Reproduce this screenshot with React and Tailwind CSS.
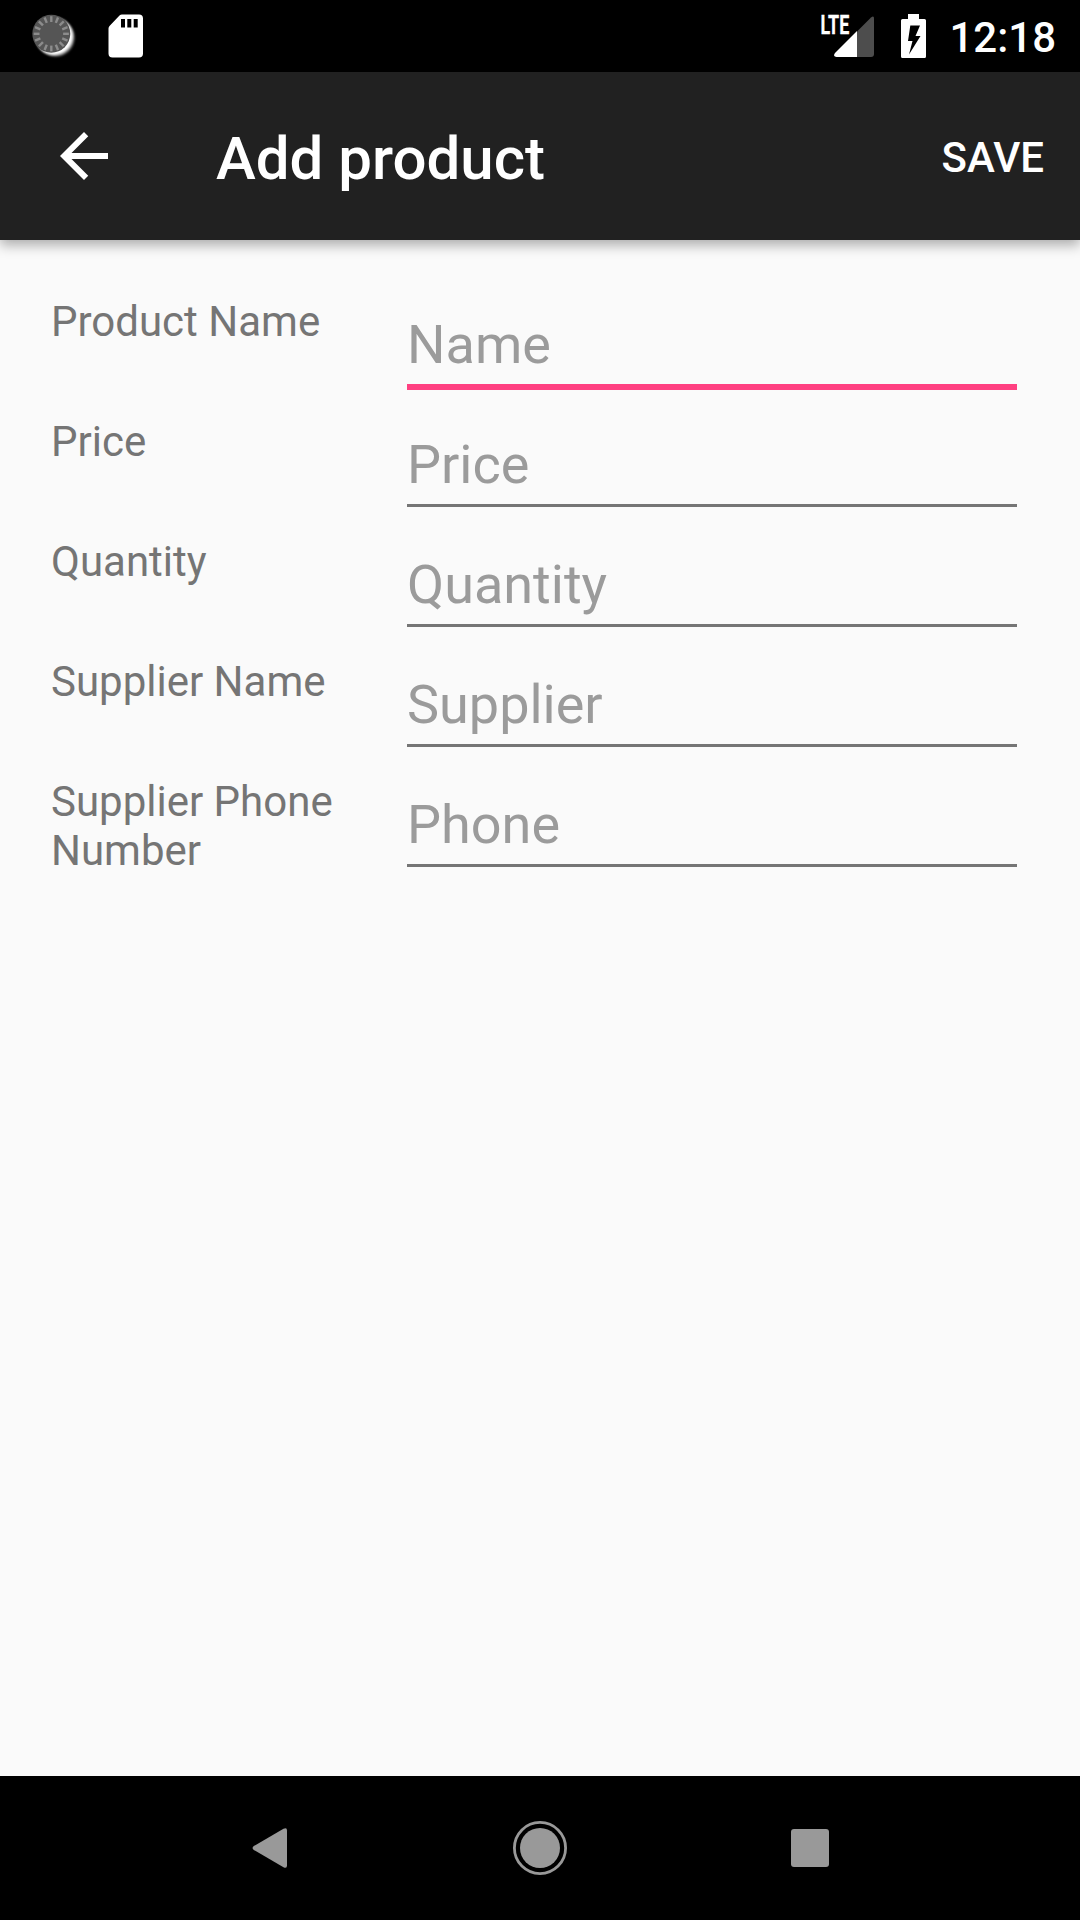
const fields = [
  { label: 'Product Name', hint: 'Name', focused: true },
  { label: 'Price', hint: 'Price' },
  { label: 'Quantity', hint: 'Quantity' },
  { label: 'Supplier Name', hint: 'Supplier' },
  { label: 'Supplier Phone Number', hint: 'Phone' },
];

const ticks = Array.from({ length: 16 }, (_, i) => i * 22.5);

function SpinnerIcon() {
  return (
    <svg width="48" height="48" viewBox="0 0 48 48">
      <defs>
        <filter id="soft" x="-20%" y="-20%" width="140%" height="140%">
          <feGaussianBlur stdDeviation="0.8" />
        </filter>
      </defs>
      <circle cx="26.6" cy="25.6" r="19" fill="#777" filter="url(#soft)" />
      <circle cx="25" cy="24.2" r="18.8" fill="#fff" filter="url(#soft)" />
      <circle cx="22.3" cy="21.8" r="19" fill="#555" />
      {ticks.map((angle) => (
        <line
          key={angle}
          x1="22.3"
          y1="10"
          x2="22.3"
          y2="4.2"
          stroke="#8c8c8c"
          strokeWidth="2.4"
          transform={`rotate(${angle} 22.3 21.8)`}
        />
      ))}
    </svg>
  );
}

function SdCardIcon() {
  return (
    <svg width="36" height="44" viewBox="0 0 36 44">
      <path
        fill="#fff"
        fillRule="evenodd"
        d="M14 .5h17a4 4 0 0 1 4 4v35a4 4 0 0 1-4 4H4.500a4 4 0 0 1-4-4V14.500q0-1.500 1-2.500L11.500 1.500q1-1 2.500-1zM13 5v8.500h4V5zM19.300 5v8.500h4V5zM25.700 5v8.500h4V5z"
      />
    </svg>
  );
}

function SignalIcon() {
  return (
    <svg className="overflow-visible" width="56" height="46" viewBox="0 0 56 46">
      <path fill="#4d4d4d" d="M37 18.500 51 4.500q3-2.500 3 1V41q0 3-3 3H37z" />
      <path fill="#fff" d="M37 18v26H16.500q-4-.5-1.500-4z" />
      <text
        x="0.400"
        y="20.500"
        fill="#fff"
        stroke="#fff"
        strokeWidth="0.300"
        fontFamily="Roboto, sans-serif"
        fontWeight="700"
        fontSize="26"
        textLength="28.800"
        lengthAdjust="spacingAndGlyphs"
      >
        LTE
      </text>
    </svg>
  );
}

function BatteryIcon() {
  return (
    <svg width="25" height="44" viewBox="0 0 25 44">
      <path
        fill="#fff"
        fillRule="evenodd"
        d="M7 0h11v5h5.500Q25 5 25 6.500v36q0 1.500-1.500 1.500h-22Q0 44 0 42.500v-36Q0 5 1.500 5H7zM9.300 11.500 7 27h4.500L8 40.500 19.500 22H14.500l4.500-10.500z"
      />
    </svg>
  );
}

function StatusBar() {
  return (
    <div className="flex h-[72px] items-start justify-between bg-black">
      <div className="flex items-start pl-[29px]">
        <div className="pt-3">
          <SpinnerIcon />
        </div>
        <div className="pt-3.5 pl-[31px]">
          <SdCardIcon />
        </div>
      </div>
      <div className="flex items-start pr-6">
        <div className="pt-[13px]">
          <SignalIcon />
        </div>
        <div className="pt-3.5 pl-[25px]">
          <BatteryIcon />
        </div>
        <span className="pt-[13px] pl-[23px] text-[42px] leading-[49px] font-medium text-white">12:18</span>
      </div>
    </div>
  );
}

function AppBar() {
  return (
    <header className="flex h-[168px] items-center bg-[#212121] pr-9 pl-12 text-white shadow-[0_5px_12px_rgba(0,0,0,0.32)]">
      <svg className="size-[72px]" viewBox="0 0 24 24" fill="currentColor">
        <path d="M20 11H7.830l5.590-5.590L12 4l-8 8 8 8 1.410-1.410L7.830 13H20v-2z" />
      </svg>
      <h1 className="grow pt-[5px] pl-24 text-[60px] leading-[70px] font-medium">Add product</h1>
      <button className="pt-0.5 text-[42px] leading-[49px] font-medium">SAVE</button>
    </header>
  );
}

function Field({ label, hint, focused }) {
  return (
    <div className="flex h-[120px] items-start">
      <label className="w-[356px] pr-[60px] text-[42px] leading-[49px] text-[#757575]">{label}</label>
      <div className="w-[610px] pt-4">
        <div className="h-[71px] text-[54px] leading-[63px] text-[#9b9b9b]">{hint}</div>
        <div className={focused ? 'h-1.5 bg-[#ff4081]' : 'h-[3px] bg-[#757575]'} />
      </div>
    </div>
  );
}

function NavBar() {
  return (
    <nav className="flex h-36 items-center justify-center bg-black text-[#999999]">
      <div className="flex w-[270px] justify-center">
        <svg width="60" height="60" viewBox="0 0 60 60" fill="currentColor">
          <path d="M13.800 28 43.500 10.700Q47 9 47 12.500v35q0 3.500-3.500 1.800L13.800 32q-2.500-2 0-4z" />
        </svg>
      </div>
      <div className="flex w-[270px] justify-center">
        <svg width="60" height="60" viewBox="0 0 60 60" fill="currentColor">
          <circle cx="30" cy="30" r="25.600" fill="none" stroke="currentColor" strokeWidth="2.800" />
          <circle cx="30" cy="30" r="20" />
        </svg>
      </div>
      <div className="flex w-[270px] justify-center">
        <div className="size-[37.500px] rounded-[3px] bg-[#999999]" />
      </div>
    </nav>
  );
}

export default function App() {
  return (
    <div className="flex h-[1920px] w-[1080px] flex-col bg-[#fafafa] font-['Roboto',sans-serif]">
      <StatusBar />
      <AppBar />
      <main className="grow pt-[57px] pl-[51px]">
        {fields.map((field) => (
          <Field key={field.label} {...field} />
        ))}
      </main>
      <NavBar />
    </div>
  );
}
